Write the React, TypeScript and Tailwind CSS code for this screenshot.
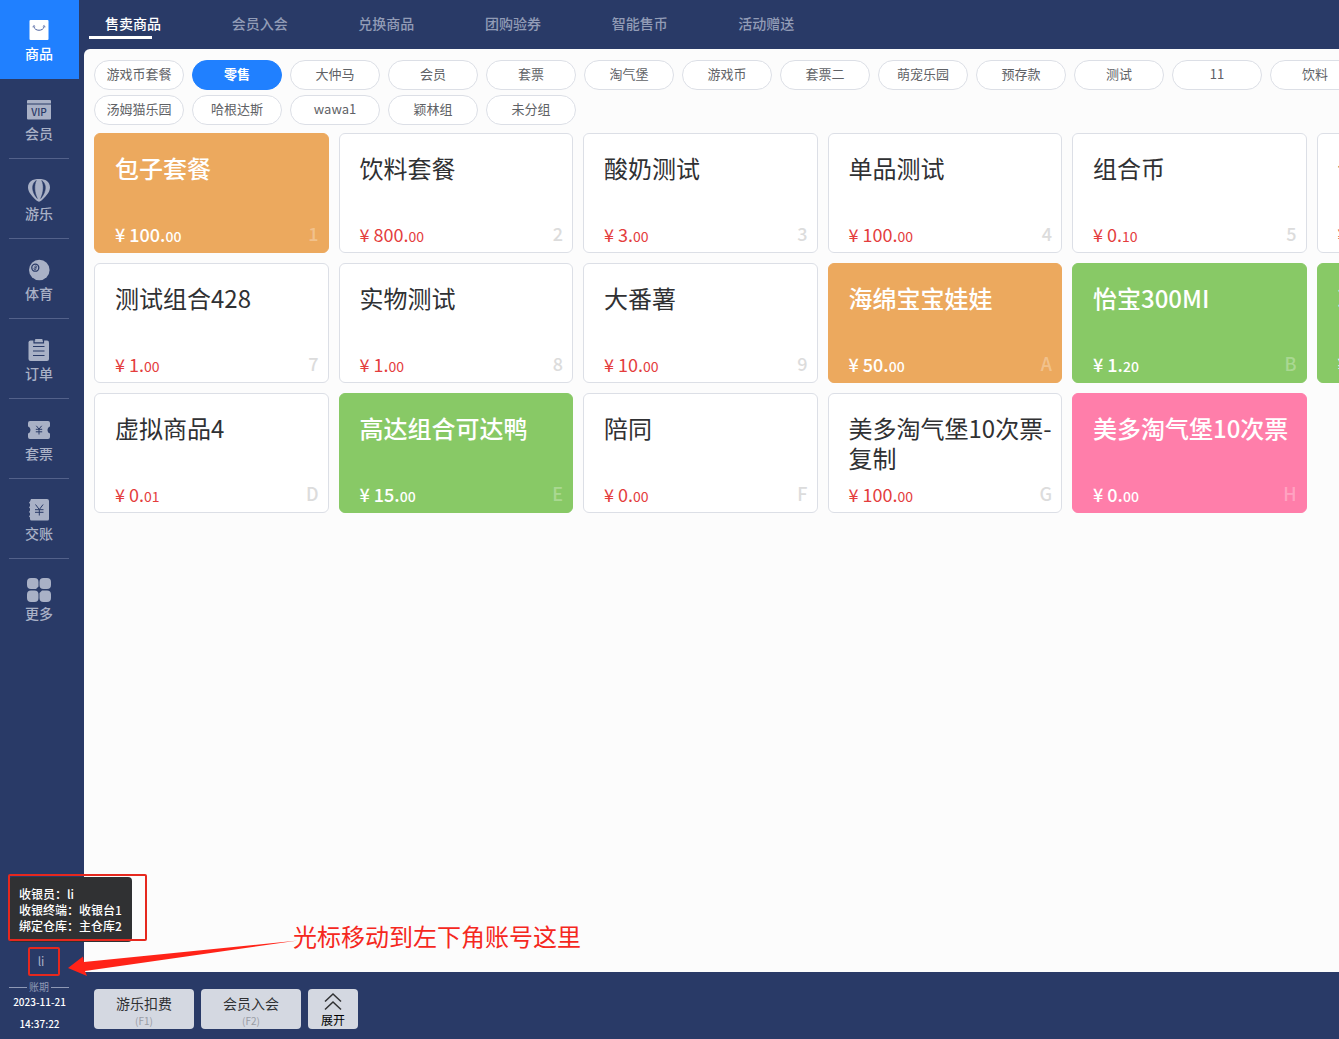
import React, { useState } from "react";
import { clsx } from "clsx";

type Tone = "plain" | "orange" | "green" | "pink";

interface Product {
  code: string;
  name: string;
  price: string;
  tone?: Tone;
}

const tabs = ["售卖商品", "会员入会", "兑换商品", "团购验券", "智能售币", "活动赠送"];

const groupRows = [
  ["游戏币套餐", "零售", "大仲马", "会员", "套票", "淘气堡", "游戏币", "套票二", "萌宠乐园", "预存款", "测试", "11", "饮料"],
  ["汤姆猫乐园", "哈根达斯", "wawa1", "颖林组", "未分组"],
];

const products: Product[] = [
  { code: "1", name: "包子套餐", price: "100.00", tone: "orange" },
  { code: "2", name: "饮料套餐", price: "800.00" },
  { code: "3", name: "酸奶测试", price: "3.00" },
  { code: "4", name: "单品测试", price: "100.00" },
  { code: "5", name: "组合币", price: "0.10" },
  { code: "6", name: "气球", price: "1.00" },
  { code: "7", name: "测试组合428", price: "1.00" },
  { code: "8", name: "实物测试", price: "1.00" },
  { code: "9", name: "大番薯", price: "10.00" },
  { code: "A", name: "海绵宝宝娃娃", price: "50.00", tone: "orange" },
  { code: "B", name: "怡宝300MI", price: "1.20", tone: "green" },
  { code: "C", name: "冰红茶", price: "3.00", tone: "green" },
  { code: "D", name: "虚拟商品4", price: "0.01" },
  { code: "E", name: "高达组合可达鸭", price: "15.00", tone: "green" },
  { code: "F", name: "陪同", price: "0.00" },
  { code: "G", name: "美多淘气堡10次票-复制", price: "100.00" },
  { code: "H", name: "美多淘气堡10次票", price: "0.00", tone: "pink" },
];

const toneClass: Record<Tone, string> = {
  plain: "bg-white border-[#dcdfe6] text-[#303133]",
  orange: "bg-[#eca95e] border-[#eca95e] text-white font-medium",
  green: "bg-[#88c966] border-[#88c966] text-white font-medium",
  pink: "bg-[#ff7eaa] border-[#ff7eaa] text-white font-medium",
};

// Sidebar icons share a 28x28 box, "cut" is the colour behind the icon
const cut = "#293a67";

const BagIcon = () => (
  <svg viewBox="0 0 28 28" className="size-7" fill="currentColor">
    <rect x="4.500" y="4" width="19" height="20" rx="1" />
    <path d="M8.800 10.500c.8 5 9.600 5 10.400 0" fill="none" stroke="#4a5f9e" strokeWidth="1" />
    <path d="M7.800 11.200l1-1.700 1.400 1M17.800 10.500l1.400-1 1 1.700" fill="none" stroke="#4a5f9e" strokeWidth=".8" />
  </svg>
);

const VipIcon = () => (
  <svg viewBox="0 0 28 28" className="size-7" fill="currentColor">
    <path d="M3 4h22a1 1 0 0 1 1 1v2.500H2V5a1 1 0 0 1 1-1zM2 8.500h24v14a1 1 0 0 1-1 1H3a1 1 0 0 1-1-1z" />
    <text x="14" y="19.500" textAnchor="middle" fontSize="10" fontWeight="500" fill={cut}>VIP</text>
  </svg>
);

const BalloonIcon = () => (
  <svg viewBox="0 0 28 28" className="size-7" fill="currentColor">
    <path d="M14 3C7.500 3 3 5.500 3 11.500c0 5 5 9.500 8.500 13 1.700 1.500 3.300 1.500 5 0 3.500-3.500 8.500-8 8.500-13C25 5.500 20.500 3 14 3z" />
    <path d="M11.300 4.500C6 8 6.500 16 12.300 22.500 9.300 16 9 9 11.300 4.500zM16.700 4.500C22 8 21.500 16 15.700 22.500 18.700 16 19 9 16.700 4.500z" fill={cut} stroke={cut} strokeWidth=".5" />
  </svg>
);

const BallIcon = () => (
  <svg viewBox="0 0 28 28" className="size-7" fill="currentColor">
    <circle cx="14.300" cy="14" r="10.300" />
    <circle cx="10.300" cy="11.700" r="3.500" fill="none" stroke={cut} strokeWidth="1.300" />
    <circle cx="10.800" cy="10.700" r=".9" fill="none" stroke={cut} strokeWidth=".8" />
    <circle cx="10" cy="12.700" r="1" fill="none" stroke={cut} strokeWidth=".8" />
  </svg>
);

const OrderIcon = () => (
  <svg viewBox="0 0 28 28" className="size-7" fill="currentColor">
    <rect x="3.500" y="4.500" width="20.500" height="20.500" rx="2" />
    <path d="M9 4v2.800h9.500V4" fill="none" stroke={cut} strokeWidth="1.200" />
    <rect x="10.200" y="3" width="7.200" height="2.800" />
    <path d="M8 10.500h11.500M8 15h11.500M8 19.500h11.500" stroke={cut} strokeWidth="1.200" />
  </svg>
);

const TicketIcon = () => (
  <svg viewBox="0 0 28 28" className="size-7" fill="currentColor">
    <path d="M5 5h18a2 2 0 0 1 2 2v3.500c-3.300 1-3.300 6 0 7V21a2 2 0 0 1-2 2H5a2 2 0 0 1-2-2v-3.500c3.300-1 3.300-6 0-7V7a2 2 0 0 1 2-2z" />
    <path d="M11.300 9.800l2.700 3.200 2.700-3.200M14 13v5.500M10.800 13.300h6.400M10.800 15.800h6.400" fill="none" stroke={cut} strokeWidth="1" />
  </svg>
);

const LedgerIcon = () => (
  <svg viewBox="0 0 28 28" className="size-7" fill="currentColor">
    <path d="M6 3h16a2 2 0 0 1 2 2v18a1.500 1.500 0 0 1-1.500 1.500H6.500A1.500 1.500 0 0 1 5 23v-1.500l-1-1 1-1.500v-2l-1-1 1-1.500v-2l-1-1 1-1.500v-2l-1-1.500 1-1z" />
    <path d="M10.500 8.500l3.800 5 3.800-5M14.300 13.500v6M10 13.700h8.500M10 16.300h8.500" fill="none" stroke={cut} strokeWidth="1" />
  </svg>
);

const MoreIcon = () => (
  <svg viewBox="0 0 28 28" className="size-7" fill="currentColor">
    <path d="M6 2h3.500a4 4 0 0 1 4 4v4.500L11 13H6a4 4 0 0 1-4-4V6a4 4 0 0 1 4-4zM18.500 2H22a4 4 0 0 1 4 4v3a4 4 0 0 1-4 4h-3.500a4 4 0 0 1-4-4V6a4 4 0 0 1 4-4zM6 14.500h3.500a4 4 0 0 1 4 4V22a4 4 0 0 1-4 4H6a4 4 0 0 1-4-4v-3.500a4 4 0 0 1 4-4zM17 14.500h5a4 4 0 0 1 4 4V22a4 4 0 0 1-4 4h-3.500a4 4 0 0 1-4-4v-5z" />
  </svg>
);

const navItems = [
  { label: "商品", icon: BagIcon },
  { label: "会员", icon: VipIcon },
  { label: "游乐", icon: BalloonIcon },
  { label: "体育", icon: BallIcon },
  { label: "订单", icon: OrderIcon },
  { label: "套票", icon: TicketIcon },
  { label: "交账", icon: LedgerIcon },
  { label: "更多", icon: MoreIcon },
];

function Sidebar() {
  const [current, setCurrent] = useState("商品");

  return (
    <aside className="w-[79px] shrink-0 flex flex-col">
      <nav className="flex flex-col gap-px">
        {navItems.map((item, i) => (
          <button
            key={item.label}
            onClick={() => setCurrent(item.label)}
            className={clsx(
              "h-[79px] pl-[9px] flex font-medium",
              current === item.label ? "bg-[#2080ff] text-white" : "text-[#a9b1c6]"
            )}
          >
            <span
              className={clsx(
                "w-[60px] h-full pt-4 flex flex-col items-center border-b",
                i === 0 || i === navItems.length - 1 ? "border-transparent" : "border-[#53618a]"
              )}
            >
              <item.icon />
              <span className="text-sm leading-[18px]">{item.label}</span>
            </span>
          </button>
        ))}
      </nav>

      <div className="mt-auto flex flex-col pb-[7px]">
        <div className="relative self-start ml-7 mb-1">
          <button className="block w-8 h-[29px] pr-1.5 pb-0.5 text-xs text-[#a9b1c6]">li</button>
          <div className="absolute inset-0 border-2 border-[#e6281e] rounded-xs pointer-events-none" />
        </div>
        <div className="w-[60px] ml-[9px] flex items-center gap-0.5 text-[10px] leading-[14px] text-[#8f99b5]">
          <span className="flex-1 h-px bg-[#8f99b5]" />
          账期
          <span className="flex-1 h-px bg-[#8f99b5]" />
        </div>
        <time className="flex flex-col items-center gap-1.5 text-[10px] leading-4 font-medium text-white">
          <span>2023-11-21</span>
          <span>14:37:22</span>
        </time>
      </div>
    </aside>
  );
}

function ProductCard({ code, name, price, tone = "plain" }: Product) {
  const [whole, cents] = price.split(".");

  return (
    <button
      className={clsx(
        "h-[120px] pt-[19px] pl-5 pr-[9px] pb-1 flex flex-col justify-between text-left rounded-md border",
        toneClass[tone]
      )}
    >
      <span className="text-2xl leading-[30px] break-all">{name}</span>
      <span className="w-full flex items-end justify-between text-lg">
        <span className={clsx("leading-7", tone === "plain" && "text-[#e43d3d]")}>
          ¥ {whole}.<span className="text-sm">{cents}</span>
        </span>
        <span className={clsx("leading-[30px]", tone === "plain" ? "text-[#dcdcdc] font-medium" : "text-white/30")}>
          {code}
        </span>
      </span>
    </button>
  );
}

function Annotation() {
  return (
    <>
      <div className="absolute left-[9px] bottom-[97px] w-[123px] h-[65px] pl-2.5 pt-[9px] rounded-sm bg-[#303133] text-xs leading-4 font-medium text-white whitespace-nowrap">
        <p>收银员：li</p>
        <p>收银终端：收银台1</p>
        <p>绑定仓库：主仓库2</p>
      </div>
      <div className="absolute left-2 bottom-[98px] w-[139px] h-[67px] border-2 border-[#e6281e] rounded-xs pointer-events-none" />
      <svg viewBox="0 0 232 38" className="absolute left-[67px] bottom-[62px] w-[232px] h-[38px] pointer-events-none">
        <path d="M1 29L16 17.500l1 5.500L231 1.500 18 32l2 5z" fill="#ff2318" />
      </svg>
      <p className="absolute left-[293px] bottom-[85px] text-2xl leading-9 text-[#f5281e] whitespace-nowrap">光标移动到左下角账号这里</p>
    </>
  );
}

export default function App() {
  const [tab, setTab] = useState("售卖商品");
  const [group, setGroup] = useState("零售");

  return (
    <div className="relative h-screen flex gap-[5px] overflow-hidden bg-[#293a67] font-['Noto_Sans_CJK_SC',sans-serif]">
      <Sidebar />

      <div className="flex-1 min-w-0 flex flex-col">
        <header className="h-[49px] shrink-0 pl-[5px]">
          <div className="w-[760px] grid grid-cols-6">
            {tabs.map((t) => (
              <button
                key={t}
                onClick={() => setTab(t)}
                className={clsx(
                  "pt-3 flex flex-col gap-0.5 text-left text-sm leading-[22px] font-medium",
                  tab === t ? "text-white" : "text-[#929cb6]"
                )}
              >
                <span className="pl-4">{t}</span>
                {tab === t && <span className="w-1/2 h-[3px] bg-white" />}
              </button>
            ))}
          </div>
        </header>

        <main className="flex-1 min-h-0 overflow-hidden rounded-tl-md bg-[#fcfcfc] pl-2.5 pt-[11px]">
          <div className="flex flex-col gap-[5px] mb-2">
            {groupRows.map((row, i) => (
              <div key={i} className="flex gap-2">
                {row.map((g) => (
                  <button
                    key={g}
                    onClick={() => setGroup(g)}
                    className={clsx(
                      "w-[90px] h-[30px] pb-0.5 shrink-0 rounded-full border text-[13px] leading-5",
                      group === g
                        ? "bg-[#2080ff] border-[#2080ff] text-white font-bold"
                        : "bg-white border-[#dcdfe6] text-[#606266]"
                    )}
                  >
                    {g}
                  </button>
                ))}
              </div>
            ))}
          </div>

          <div className="min-w-[1457px] grid grid-cols-6 gap-2.5">
            {products.map((p) => (
              <ProductCard key={p.code} {...p} />
            ))}
          </div>
        </main>

        <footer className="h-[67px] shrink-0 pl-2.5 pt-[17px] flex items-start gap-[7px]">
          {[
            { label: "游乐扣费", hint: "(F1)" },
            { label: "会员入会", hint: "(F2)" },
          ].map((b) => (
            <button key={b.hint} className="w-[100px] h-10 pt-1 flex flex-col items-center gap-0.5 rounded-sm bg-[#d4d8e1] text-[#303133]">
              <span className="text-sm leading-5">{b.label}</span>
              <span className="text-[10px] leading-3 text-[#9a9da5]">{b.hint}</span>
            </button>
          ))}
          <button className="w-[50px] h-10 pt-[3px] flex flex-col items-center rounded-sm bg-[#d4d8e1] text-black">
            <svg viewBox="0 0 20 20" className="size-5" fill="none" stroke="#303133" strokeWidth="1.500">
              <path d="M2 9.500L10 2l8 7.500M2 17.500L10 10l8 7.500" />
            </svg>
            <span className="text-xs leading-4">展开</span>
          </button>
        </footer>
      </div>

      <Annotation />
    </div>
  );
}
